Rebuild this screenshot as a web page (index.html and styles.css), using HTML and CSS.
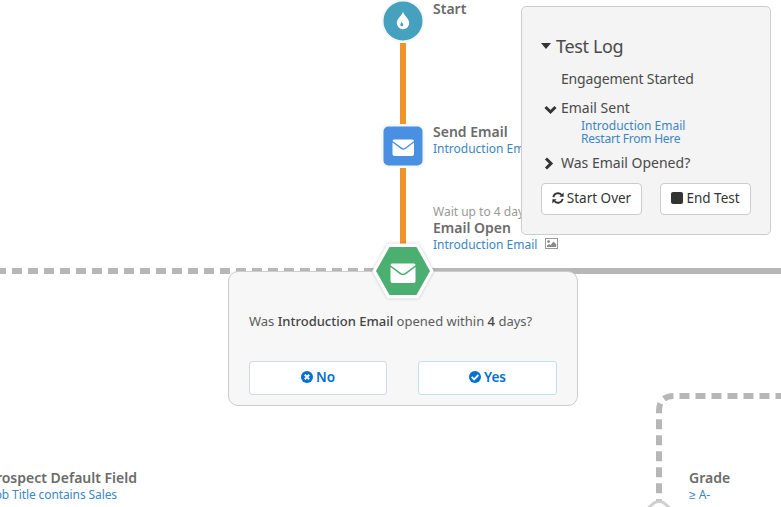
FILE: index.html
```html
<!DOCTYPE html>
<html lang="en">
<head>
<meta charset="utf-8">
<title>Engagement Test</title>
<link rel="stylesheet" href="styles.css">
</head>
<body>
<main class="canvas">
  <svg class="links" width="781" height="507" viewBox="0 0 781 507" fill="none">
    <path d="M403 43V124M403 168V244" stroke="#f0932b" stroke-width="6"/>
    <path d="M-4 271H403" stroke="#b7b7b7" stroke-width="6" stroke-dasharray="10 6"/>
    <path d="M403 271H781" stroke="#b7b7b7" stroke-width="6"/>
    <path d="M785.5 396H674Q659 396 659 411V503" stroke="#b7b7b7" stroke-width="6" stroke-dasharray="10 6"/>
    <path d="M646 510L654 503Q659 500 664 503L672 510" fill="#fff" stroke="#d0d0d0" stroke-width="3"/>
  </svg>

  <svg class="node node-start" width="44" height="44" viewBox="0 0 44 44">
    <circle cx="22" cy="22" r="20.5" fill="#45a1bd" stroke="#f6f6f6" stroke-width="2"/>
    <path d="M22 12.8C20.8 17.2 15.8 19.4 15.8 24.1a6.2 6.2 0 0 0 12.4 0C28.2 19.4 23.2 17.2 22 12.8Z" fill="#fff"/>
    <path d="M20.7 22.8c-.4 1.2-1.4 1.900-1.400 3a1.500 1.500 0 0 0 3 0c0-1.100-1.200-1.800-1.600-3Z" fill="#45a1bd"/>
  </svg>
  <div class="label label-start"><strong>Start</strong></div>

  <svg class="node node-send" width="44" height="44" viewBox="0 0 44 44">
    <rect x="1.5" y="1.5" width="41" height="41" rx="6" fill="#4a90e2" stroke="#f4f6fa" stroke-width="2"/>
    <path d="M13 15.500h18.500q1.500 0 1.500 1.500L24 23.700q-1.500 1-3 0L11.500 17q0-1.500 1.500-1.500Z" fill="#fff"/>
    <path d="M11.500 18.600l8.500 6.400q2.300 1.400 4.600 0L33 18.600V30q0 2-2 2H13.500q-2 0-2-2Z" fill="#fff"/>
  </svg>
  <div class="label label-send"><strong>Send Email</strong><a>Introduction Email</a></div>

  <div class="label label-open"><small>Wait up to 4 days</small><strong>Email Open</strong>
    <a>Introduction Email<svg class="picture" width="13" height="11" viewBox="0 0 13 11"><rect x=".5" y=".5" width="12" height="10" fill="#fff" stroke="#999"/><circle cx="3.600" cy="3.600" r="1.400" fill="#888"/><path d="M2 9V7.500L4 6l1.500 1.300L8.500 3.500l2.700 2.700V9Z" fill="#888"/></svg></a>
  </div>
  <div class="label label-field"><strong>Prospect Default Field</strong><a>Job Title contains Sales</a></div>
  <div class="label label-grade"><strong>Grade</strong><a>≥ A-</a></div>

  <section class="question">
    <p>Was <b>Introduction Email</b> opened within <b>4</b> days?</p>
    <div class="answers">
      <button class="answer"><svg width="12" height="12" viewBox="0 0 12 12"><circle cx="6" cy="6" r="6" fill="#0070d2"/><path d="M3.800 3.800l4.400 4.400M8.200 3.800L3.800 8.200" stroke="#fff" stroke-width="2"/></svg><span>No</span></button>
      <button class="answer answer-yes"><svg width="12" height="12" viewBox="0 0 12 12"><circle cx="6" cy="6" r="6" fill="#0070d2"/><path d="M2.700 5.900l2.400 2.400 4.300-4.300" fill="none" stroke="#fff" stroke-width="1.900"/></svg><span>Yes</span></button>
    </div>
  </section>

  <svg class="node node-open" width="64" height="60" viewBox="0 0 64 60">
    <path d="M17.500 4H46.500L61 30L46.500 56H17.500L3 30Z" fill="#fff" stroke="#fff" stroke-width="3" stroke-linejoin="round"/>
    <path d="M18.500 6H45.500L59 30L45.500 54H18.500L5 30Z" fill="#4caf72"/>
    <path d="M21 22.500h22q1.500 0 1.500 1.700L34 32q-2 1.500-4 0L19.500 24.200q0-1.700 1.500-1.700Z" fill="#fff"/>
    <path d="M19.500 26l9.500 7.300q3 2 6 0L44.500 26V40q0 2-2 2H21.500q-2 0-2-2Z" fill="#fff"/>
  </svg>

  <aside class="log">
    <h2><i class="caret"></i>Test Log</h2>
    <div class="entry entry-first">Engagement Started</div>
    <div class="entry entry-sent"><svg class="chevron" width="13" height="13" viewBox="0 0 13 13"><path d="M1.500 5L6.500 10L11.500 5" fill="none" stroke="#333" stroke-width="3"/></svg>Email Sent</div>
    <div class="entry-links"><a>Introduction Email</a><a class="restart">Restart From Here</a></div>
    <div class="entry entry-opened"><svg class="chevron" width="13" height="13" viewBox="0 0 13 13"><path d="M2 1.500L7 6.500L2 11.500" fill="none" stroke="#333" stroke-width="3"/></svg>Was Email Opened?</div>
    <div class="actions">
      <button class="start-over"><svg width="12" height="12" viewBox="0 0 13 13"><path d="M1.500 5.500A5 5 0 0 1 10.300 3.200M11.500 7.500A5 5 0 0 1 2.700 9.800" fill="none" stroke="#333" stroke-width="2"/><path d="M12.600.6V5.200H8ZM.4 12.400V7.800H5Z" fill="#333"/></svg><span>Start Over</span></button>
      <button class="end-test"><i class="stop"></i><span>End Test</span></button>
    </div>
  </aside>
</main>
</body>
</html>
```
FILE: styles.css
```css
* { box-sizing: border-box; }
body { margin: 0; background: #fff; font-family: "Noto Sans", sans-serif; }
button { font: inherit; margin: 0; }
a { color: #3c86c3; }

.canvas { position: relative; width: 781px; height: 507px; overflow: hidden; }
.links { position: absolute; inset: 0; }
.node { position: absolute; }
.node-start { left: 381px; top: -1px; }
.node-send { left: 381px; top: 124px; }
.node-open { left: 371px; top: 241px; filter: drop-shadow(0 0 1.5px rgba(0, 0, 0, .22)); }

.label { position: absolute; display: flex; flex-direction: column; white-space: nowrap; font-size: 12px; line-height: 16px; }
.label strong { font-size: 14px; line-height: 17px; font-weight: 600; color: #6b6b6b; }
.label small { font-size: 12px; line-height: 16px; color: #999; }
.label-start { left: 433px; top: 0; }
.label-send { left: 433px; top: 123px; }
.label-send a, .label-field a, .label-grade a { padding-top: 1px; }
.label-open { left: 433px; top: 204px; }
.label-open strong { line-height: 15px; padding-bottom: 2px; }
.label-field { right: 644px; top: 469px; align-items: flex-end; }
.label-field a { margin-right: 20px; letter-spacing: -.1px; }
.label-grade { left: 689px; top: 469px; }
.picture { margin-left: 8px; }

.question { position: absolute; left: 228px; top: 271px; width: 350px; height: 135px; padding: 39px 20px 0; border: 1px solid #ccc; border-radius: 10px; background: #f7f7f7; }
.question p { margin: 0; font-size: 13px; line-height: 20px; color: #5c5c5c; white-space: nowrap; }
.question b { font-weight: 500; color: #444; }
.answers { display: flex; justify-content: space-between; margin-top: 30px; }
.answer { display: flex; align-items: center; justify-content: center; gap: 3px; width: 138px; height: 34px; padding: 0 0 2px; border: 1px solid #d4d9e6; border-radius: 3px; background: #fff; color: #0070d2; font-size: 13.5px; font-weight: 600; }
.answer-yes { width: 139px; border-color: #c5dfeb; }

.log { position: absolute; left: 521px; top: 6px; width: 250px; height: 229px; padding: 27px 19px 0; border: 1px solid #ccc; border-radius: 5px; background: #f4f4f4; color: #4a4a4a; }
.log h2 { display: flex; align-items: center; gap: 5px; margin: 0; font-size: 18px; line-height: 24px; font-weight: 400; letter-spacing: -.35px; }
.caret { border: 5px solid transparent; border-top: 6px solid #333; border-bottom: 0; }
.entry { display: flex; align-items: center; padding-left: 20px; font-size: 14px; line-height: 20px; white-space: nowrap; }
.entry-first { margin-top: 11px; letter-spacing: -.17px; }
.entry-sent { margin-top: 9px; }
.chevron { margin: 0 4px 0 -17px; }
.entry-links { display: flex; flex-direction: column; margin-top: 1px; padding-left: 40px; font-size: 12px; line-height: 13px; }
.restart { letter-spacing: -.22px; }
.entry-opened { margin-top: 8px; }
.actions { display: flex; justify-content: space-between; margin-top: 10px; }
.actions button { display: flex; align-items: center; justify-content: center; gap: 3px; width: 101px; height: 32px; padding: 0 0 2px; border: 1px solid #ccc; border-radius: 4px; background: #fff; color: #333; font-size: 13.5px; white-space: nowrap; }
.actions .end-test { width: 91px; }
.stop { width: 12px; height: 12px; border-radius: 2px; background: #333; }
```
